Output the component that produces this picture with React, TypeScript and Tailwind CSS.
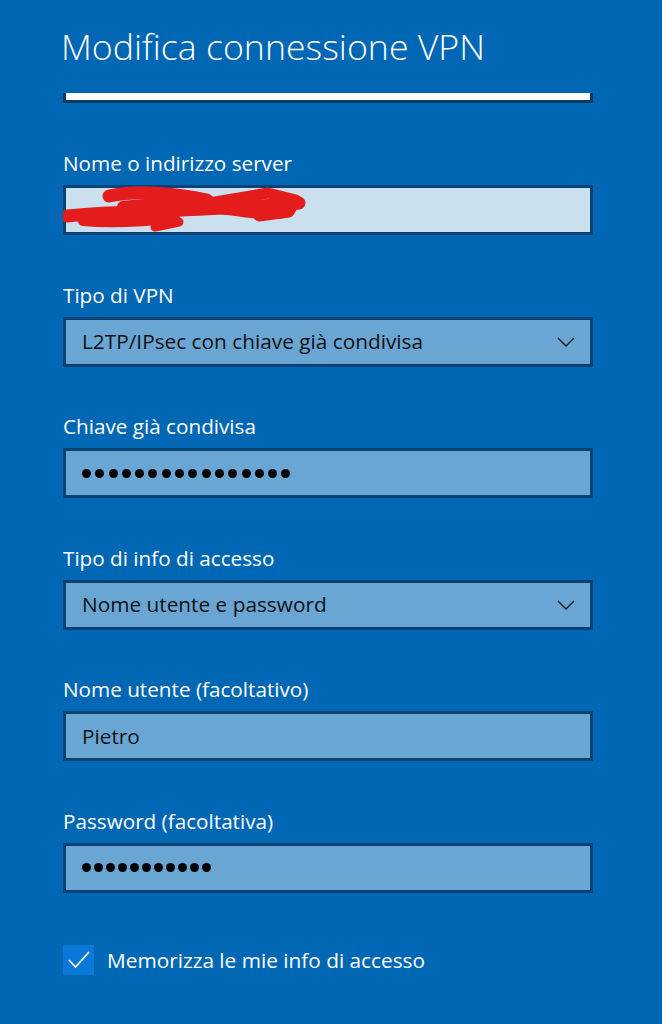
import React from "react";

const font = { fontFamily: '"Open Sans", "Noto Sans", sans-serif' };

function Dots({ count, gap }: { count: number; gap: string }) {
    return (
        <div className={`flex items-center ${gap}`}>
            {Array.from({ length: count }).map((_, i) => (
                <span key={i} className="block w-[9px] h-[9px] rounded-full bg-black" />
            ))}
        </div>
    );
}

function Chevron() {
    return (
        <svg width="18" height="10" viewBox="0 0 18 10" className="shrink-0">
            <polyline points="1,1 9,9 17,1" fill="none" stroke="#1a1a1a" strokeWidth="1.4" />
        </svg>
    );
}

function Field({ label, children, light }: { label: string; children?: React.ReactNode; light?: boolean }) {
    return (
        <div className="flex flex-col">
            <div className="text-[20.7px] leading-[28px] text-white">{label}</div>
            <div
                className={`relative mt-[8px] h-[50px] w-[530px] border-[3px] border-[#0b4276] flex items-center justify-between pl-[16px] pr-[15px] text-[20.8px] text-[#111] ${light ? "bg-[#cbe0ef]" : "bg-[#69a6d4]"}`}>
                {children}
            </div>
        </div>
    );
}

export default function App() {
    return (
        <div className="w-[662px] h-[1024px] bg-[#0067b4] overflow-hidden" style={font}>
            <div className="pl-[61px] pt-[22px]">
                <h1 className="text-[35.7px] leading-[48px] font-light text-white">Modifica connessione VPN</h1>
            </div>
            <div className="ml-[63px] mt-[23px] w-[530px] h-[10px] bg-white border-l-[3px] border-r-[3px] border-b-[3px] border-[#0b3a68]" />

            <div className="ml-[63px] mt-[46px] flex flex-col gap-[45.5px]">
                <Field label="Nome o indirizzo server" light>
                    <svg width="250" height="50" viewBox="0 0 250 50" className="absolute left-[-3px] top-[-3px]">
                        <g fill="none" stroke="#e41c1c" strokeLinecap="round" strokeLinejoin="round">
                            <path d="M4 31 C 40 27, 100 26, 140 24 S 210 21, 236 18" strokeWidth="13" />
                            <path d="M46 11 C 74 5, 112 8, 144 15" strokeWidth="13" />
                            <path d="M140 19 L 205 8 L 233 15 L 226 27 L 196 31" strokeWidth="11" />
                            <path d="M110 22 C 150 14, 180 30, 218 26" strokeWidth="15" />
                            <path d="M92 42 L 116 37" strokeWidth="9" />
                            <path d="M20 36 C 50 39, 80 37, 112 33" strokeWidth="10" />
                            <path d="M60 22 C 90 18, 120 20, 150 20" strokeWidth="12" />
                        </g>
                    </svg>
                </Field>
                <Field label="Tipo di VPN">
                    <span className="leading-none">L2TP/IPsec con chiave già condivisa</span>
                    <Chevron />
                </Field>
                <Field label="Chiave già condivisa">
                    <Dots count={16} gap="gap-[4.3px]" />
                </Field>
                <Field label="Tipo di info di accesso">
                    <span className="leading-none">Nome utente e password</span>
                    <Chevron />
                </Field>
                <Field label="Nome utente (facoltativo)">
                    <span className="leading-none">Pietro</span>
                </Field>
                <Field label="Password (facoltativa)">
                    <Dots count={11} gap="gap-[3px]" />
                </Field>
            </div>

            <div className="ml-[63px] mt-[52px] flex items-center gap-[13px]">
                <div className="w-[31px] h-[30px] bg-[#0a78d6] flex items-center justify-center">
                    <svg width="24" height="20" viewBox="0 0 24 20">
                        <polyline points="2,10 8.5,17 22,2" fill="none" stroke="#fff" strokeWidth="1.8" />
                    </svg>
                </div>
                <span className="text-[20.8px] leading-[28px] text-white">Memorizza le mie info di accesso</span>
            </div>
        </div>
    );
}
